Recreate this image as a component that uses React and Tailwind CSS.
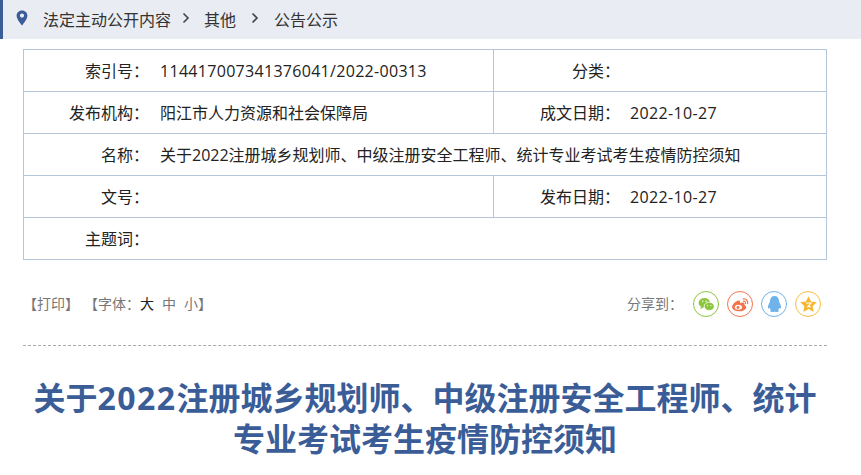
import React from 'react';

const Row = ({ label, value, label2, value2, last }) => (
  <div className={`flex ${last ? 'h-[41px]' : 'h-[42px] border-b border-[#b5c6dc]'}`}>
    <div className="flex items-center flex-1 min-w-0">
      <span className="w-[125px] text-right shrink-0">{label}：</span>
      <span className="ml-[11px] whitespace-nowrap">{value}</span>
    </div>
    {label2 && (
      <div className="flex items-center w-[333px] border-l border-[#b5c6dc]">
        <span className="w-[126px] text-right shrink-0">{label2}：</span>
        <span className="ml-[10px] tracking-[0.35px]">{value2}</span>
      </div>
    )}
  </div>
);

const ShareIcon = ({ color, children }) => (
  <div className={`w-[26px] h-[26px] rounded-full border flex items-center justify-center ${color}`}>
    <svg width="21" height="21" viewBox="0 0 20 20">{children}</svg>
  </div>
);

const Chevron = ({ className }) => (
  <svg width="8" height="12" viewBox="0 0 8 12" className={className}>
    <path d="M1.5 1.5 6 6 1.5 10.5" fill="none" stroke="#444" strokeWidth="1.6" />
  </svg>
);

export default function App() {
  return (
    <div className="w-[861px] h-[475px] overflow-hidden bg-white text-[#222] text-[16px] font-['Open_Sans','Noto_Sans_CJK_SC',sans-serif]">
      {/* Breadcrumb */}
      <div className="h-[39px] bg-[#e9ecf2] border-l-[3px] border-[#3a5d97] flex items-center pl-[13px] text-[#333]">
        <svg width="12" height="16" viewBox="0 0 12 16" className="mr-[15px] -mt-[4px]">
          <path d="M6 0.5C2.8 0.5 0.6 2.8 0.6 5.8 0.6 9.4 6 15.5 6 15.5S11.4 9.4 11.4 5.8C11.4 2.8 9.2 0.5 6 0.5ZM6 7.7A2.1 2.1 0 1 1 6 3.5 2.1 2.1 0 0 1 6 7.7Z" fill="#3a5d97" />
        </svg>
        <span>法定主动公开内容</span>
        <Chevron className="ml-[11px] mr-[14px] -mt-[3px]" />
        <span>其他</span>
        <Chevron className="ml-[15px] mr-[15px] -mt-[3px]" />
        <span>公告公示</span>
      </div>

      <div className="px-[23px] w-[850px]">
        {/* Info table */}
        <div className="mt-[10px] border border-[#b5c6dc] w-[804px]">
          <Row label="索引号" value={<span className="tracking-[0.3px]">114417007341376041/2022-00313</span>} label2="分类" value2="" />
          <Row label="发布机构" value="阳江市人力资源和社会保障局" label2="成文日期" value2="2022-10-27" />
          <Row label="名称" value="关于2022注册城乡规划师、中级注册安全工程师、统计专业考试考生疫情防控须知" />
          <Row label="文号" value="" label2="发布日期" value2="2022-10-27" />
          <Row label="主题词" value="" last />
        </div>

        {/* Tools */}
        <div className="w-[804px] h-[86px] border-b border-dashed border-[#aaa] flex items-start justify-between pt-[31px]">
          <div className="flex items-center text-[14px] text-[#777] h-[26px] pb-[2px]">
            <span>【打印】</span>
            <span className="ml-[5px]">【字体：</span>
            <span className="text-[#222]">大</span>
            <span className="ml-[8px]">中</span>
            <span className="ml-[8px]">小</span>
            <span>】</span>
          </div>
          <div className="flex items-center">
            <span className="text-[14px] text-[#777] mr-[10px] pb-[2px]">分享到：</span>
            <div className="flex gap-[8px] mr-[6px]">
              <ShareIcon color="border-[#8cc63f]">
                <ellipse cx="8" cy="8.5" rx="5.5" ry="4.6" fill="#8cc63f" />
                <path d="M5 12l-1 2.4 3-1.6z" fill="#8cc63f" />
                <ellipse cx="12.6" cy="11.8" rx="4.8" ry="4" fill="#8cc63f" stroke="#fff" strokeWidth="0.8" />
                <circle cx="6.3" cy="7" r=".7" fill="#fff" />
                <circle cx="9.6" cy="7" r=".7" fill="#fff" />
                <circle cx="11" cy="11" r=".6" fill="#fff" />
                <circle cx="14.2" cy="11" r=".6" fill="#fff" />
              </ShareIcon>
              <ShareIcon color="border-[#f2744a]">
                <path d="M8.6 16.5C5 16.5 2 14.8 2 12.4 2 9.6 6.6 5.4 8.8 6.2 10.2 6.7 9.4 8.4 9.6 8.6 11.6 7.7 14 8 14 9.6 14 10.2 13.6 10.3 13.9 10.6 15.2 11 15.7 11.9 15.4 13 14.8 15 12 16.5 8.6 16.5Z" fill="#f2744a" />
                <ellipse cx="8" cy="12.6" rx="3.4" ry="2.4" fill="#fff" />
                <circle cx="7.6" cy="12.8" r="1.4" fill="#f2744a" />
                <path d="M12.5 4.6C15 4.2 17.4 6.4 16.8 9.2M12.8 6.8C14.1 6.6 15 7.6 14.8 8.9" fill="none" stroke="#f2744a" strokeWidth="1.1" strokeLinecap="round" />
              </ShareIcon>
              <ShareIcon color="border-[#6fb3ea]">
                <path d="M10 2C7.2 2 5.8 4 5.7 6.6 5.6 8 4 10 3.7 12.2 3.5 14 4.6 14.2 5.3 13 5.6 14 6 14.7 6.6 15.3 5.6 15.7 5.6 17.2 7.6 17.2 8.7 17.2 9.4 16.9 10 16.6 10.6 16.9 11.3 17.2 12.4 17.2 14.4 17.2 14.4 15.7 13.4 15.3 14 14.7 14.4 14 14.7 13 15.4 14.2 16.5 14 16.3 12.2 16 10 14.4 8 14.3 6.6 14.2 4 12.8 2 10 2Z" fill="#6fb3ea" />
              </ShareIcon>
              <ShareIcon color="border-[#f8bd3d]">
                <path d="M10 2.2l2.4 5 5.4.7-3.9 3.8 1 5.4-4.9-2.7-4.9 2.7 1-5.4-3.9-3.8 5.4-.7z" fill="#f8b62d" />
                <path d="M7.6 8.6h4.8l-3.2 3.6h3.2" fill="none" stroke="#fff" strokeWidth="1" />
              </ShareIcon>
            </div>
          </div>
        </div>

        {/* Title */}
        <h1 className="w-[804px] mt-[31px] text-center text-[#3a5d97] text-[32px] leading-[41px] font-bold">
          关于<span className="tracking-[1.5px]">2022</span>注册城乡规划师、中级注册安全工程师、统计专业考试考生疫情防控须知
        </h1>
      </div>
    </div>
  );
}
